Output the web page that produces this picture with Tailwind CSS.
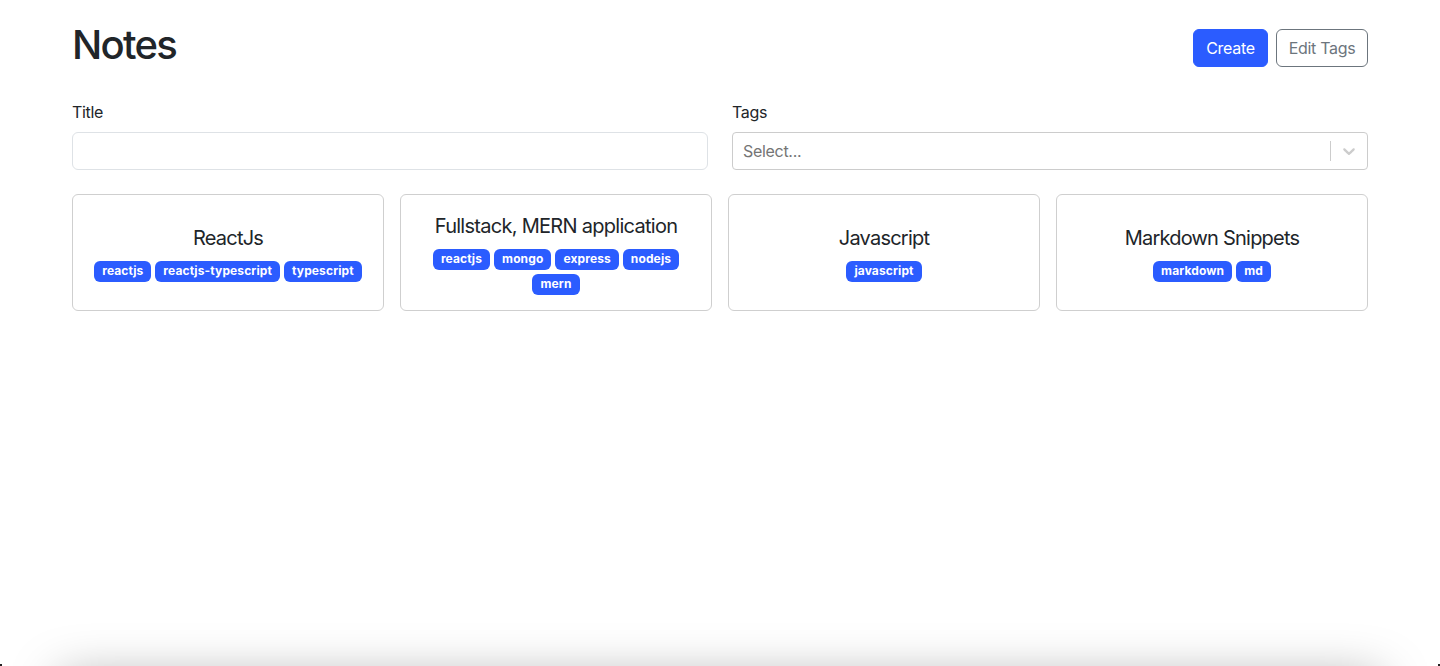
<!doctype html>
<html lang="en">
<head>
<meta charset="utf-8">
<title>Notes</title>
<script src="https://cdn.jsdelivr.net/npm/@tailwindcss/browser@4"></script>
</head>
<body class="bg-white">
<div class="relative h-[666px] overflow-hidden font-['Inter',sans-serif] text-[#212529] text-base tracking-[-0.3px]">
  <main class="px-[72px]">
    <header class="flex justify-between items-start h-[67px] mb-[33px]">
      <h1 class="text-[40px] leading-[48px] font-[550] mt-[21px] tracking-[-1.7px]">Notes</h1>
      <div class="flex gap-2 pt-[29px]">
        <button class="h-[38px] w-[75px] rounded-md border border-[#2b5cff] bg-[#2b5cff] text-white">Create</button>
        <button class="h-[38px] w-[92px] rounded-md border border-[#6c757d] text-[#6c757d]">Edit Tags</button>
      </div>
    </header>
    <form class="grid grid-cols-2 gap-6 mb-6">
      <div>
        <label class="block h-6 mb-2 leading-6">Title</label>
        <input class="block w-full h-[38px] rounded-md border border-[#dee2e6] bg-white">
      </div>
      <div>
        <label class="block h-6 mb-2 leading-6">Tags</label>
        <div class="flex items-center h-[38px] rounded border border-[#cccccc] bg-white">
          <span class="flex-1 pl-2.5 text-[#757575]">Select...</span>
          <span class="w-px h-5 bg-[#cccccc]"></span>
          <span class="flex items-center justify-center w-9 text-[#cccccc]">
            <svg viewBox="0 0 20 20" width="20" height="20" fill="currentColor"><path d="M4.516 7.548c0.436-0.446 1.043-0.481 1.576 0l3.908 3.747 3.908-3.747c0.533-0.481 1.141-0.446 1.574 0 0.436 0.445 0.408 1.197 0 1.615-0.406 0.418-4.695 4.502-4.695 4.502-0.217 0.223-0.502 0.335-0.787 0.335s-0.57-0.112-0.789-0.335c0 0-4.287-4.084-4.695-4.502s-0.436-1.17 0-1.615z"/></svg>
          </span>
        </div>
      </div>
    </form>
    <section class="grid grid-cols-4 gap-4">
      <article class="flex flex-col justify-center items-center h-[117px] p-4 rounded-md border border-[#cfcfcf]">
        <h2 class="text-xl leading-[30px] mb-2 text-center tracking-[-0.78px]">ReactJs</h2>
        <div class="flex flex-wrap justify-center gap-1">
          <span class="h-[21px] px-2 rounded-md bg-[#2b5cff] text-white text-xs font-bold leading-[20px] tracking-[0.12px]">reactjs</span>
          <span class="h-[21px] px-2 rounded-md bg-[#2b5cff] text-white text-xs font-bold leading-[20px] tracking-[0.12px]">reactjs-typescript</span>
          <span class="h-[21px] px-2 rounded-md bg-[#2b5cff] text-white text-xs font-bold leading-[20px] tracking-[0.12px]">typescript</span>
        </div>
      </article>
      <article class="flex flex-col justify-center items-center h-[117px] p-4 rounded-md border border-[#cfcfcf]">
        <h2 class="text-xl leading-[30px] mb-2 text-center tracking-[-0.72px]">Fullstack, MERN application</h2>
        <div class="flex flex-wrap justify-center gap-1">
          <span class="h-[21px] px-2 rounded-md bg-[#2b5cff] text-white text-xs font-bold leading-[20px] tracking-[0.12px]">reactjs</span>
          <span class="h-[21px] px-2 rounded-md bg-[#2b5cff] text-white text-xs font-bold leading-[20px] tracking-[0.12px]">mongo</span>
          <span class="h-[21px] px-2 rounded-md bg-[#2b5cff] text-white text-xs font-bold leading-[20px] tracking-[0.12px]">express</span>
          <span class="h-[21px] px-2 rounded-md bg-[#2b5cff] text-white text-xs font-bold leading-[20px] tracking-[0.12px]">nodejs</span>
          <span class="h-[21px] px-2 rounded-md bg-[#2b5cff] text-white text-xs font-bold leading-[20px] tracking-[0.12px]">mern</span>
        </div>
      </article>
      <article class="flex flex-col justify-center items-center h-[117px] p-4 rounded-md border border-[#cfcfcf]">
        <h2 class="text-xl leading-[30px] mb-2 text-center tracking-[-0.78px]">Javascript</h2>
        <div class="flex flex-wrap justify-center gap-1">
          <span class="h-[21px] px-2 rounded-md bg-[#2b5cff] text-white text-xs font-bold leading-[20px] tracking-[0.12px]">javascript</span>
        </div>
      </article>
      <article class="flex flex-col justify-center items-center h-[117px] p-4 rounded-md border border-[#cfcfcf]">
        <h2 class="text-xl leading-[30px] mb-2 text-center tracking-[-0.78px]">Markdown Snippets</h2>
        <div class="flex flex-wrap justify-center gap-1">
          <span class="h-[21px] px-2 rounded-md bg-[#2b5cff] text-white text-xs font-bold leading-[20px] tracking-[0.12px]">markdown</span>
          <span class="h-[21px] px-2 rounded-md bg-[#2b5cff] text-white text-xs font-bold leading-[20px] tracking-[0.12px]">md</span>
        </div>
      </article>
    </section>
  </main>
  <div class="absolute left-[60px] right-[60px] top-[678px] h-10 shadow-[0_0_50px_rgba(0,0,0,0.35)]"></div>
  <div class="absolute left-0 bottom-0 w-[2px] h-[2px] bg-[#222222]"></div>
  <div class="absolute right-0 bottom-0 w-[2px] h-[2px] bg-[#222222]"></div>
</div>
</body>
</html>
